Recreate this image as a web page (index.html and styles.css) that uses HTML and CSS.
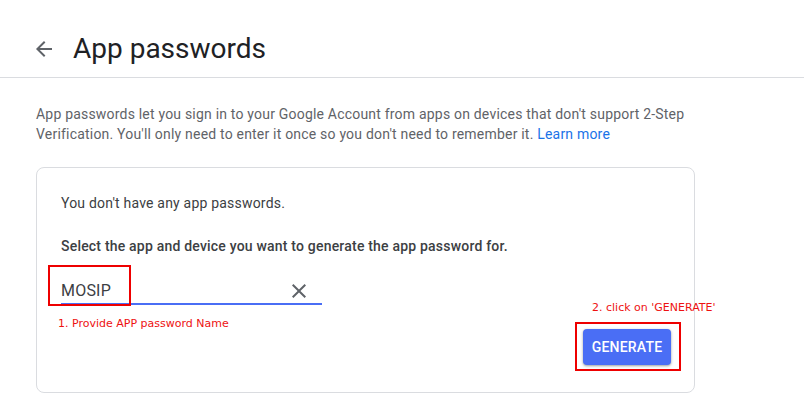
FILE: index.html
```html
<!DOCTYPE html>
<html lang="en">
<head>
<meta charset="utf-8">
<title>App passwords</title>
<link rel="stylesheet" href="styles.css">
</head>
<body>
<header class="topbar">
  <svg class="back" width="24" height="24" viewBox="0 0 24 24"><path d="M20 11H7.83l5.59-5.59L12 4l-8 8 8 8 1.41-1.41L7.83 13H20v-2z" fill="#5f6368"/></svg>
  <h1 class="title">App passwords</h1>
</header>
<main class="content">
  <p class="intro">App passwords let you sign in to your Google Account from apps on devices that don't support 2-Step Verification. You'll only need to enter it once so you don't need to remember it. <a class="link" href="#">Learn more</a></p>
  <section class="card">
    <p class="empty">You don't have any app passwords.</p>
    <p class="prompt">Select the app and device you want to generate the app password for.</p>
    <div class="field">
      <span class="value">MOSIP</span>
      <svg class="clear" width="24" height="24" viewBox="0 0 24 24"><path d="M19 6.41L17.59 5 12 10.59 6.41 5 5 6.41 10.59 12 5 17.59 6.41 19 12 13.41 17.59 19 19 17.59 13.41 12z" fill="#5f6368"/></svg>
    </div>
    <div class="actions">
      <button class="generate">GENERATE</button>
    </div>
    <span class="mark mark-field"></span>
    <span class="note note-field">1. Provide APP password Name</span>
    <span class="note note-button">2. click on 'GENERATE'</span>
    <span class="mark mark-button"></span>
  </section>
</main>
</body>
</html>
```
FILE: styles.css
```css
* { box-sizing: border-box; }
html, body { margin: 0; padding: 0; background: #fff; }
body { font-family: Roboto, "Noto Sans", Arial, sans-serif; color: #3c4043; }

.topbar {
  height: 78px;
  border-bottom: 1px solid #dadce0;
  display: flex;
  align-items: center;
  padding: 20px 0 0 32px;
}
.back { flex: none; margin-right: 17px; }
.title {
  margin: 0;
  font-weight: 400;
  font-size: 28px;
  color: #202124;
}

.content { padding: 26px 0 0 36px; }
.intro {
  margin: 0;
  width: 700px;
  font-size: 14px;
  line-height: 20px;
  letter-spacing: 0.2px;
  color: #5f6368;
}
.link { color: #1a73e8; text-decoration: none; }

.card {
  position: relative;
  margin-top: 23px;
  width: 659px;
  height: 226px;
  border: 1px solid #dadce0;
  border-radius: 8px;
  padding: 25px 23px 0 24px;
}
.empty {
  margin: 0;
  font-size: 14px;
  line-height: 20px;
  letter-spacing: 0.2px;
  color: #3c4043;
}
.prompt {
  margin: 23px 0 0;
  font-size: 14px;
  line-height: 20px;
  letter-spacing: 0.2px;
  font-weight: 500;
  color: #3c4043;
}
.field {
  margin-top: 23px;
  width: 261px;
  height: 26px;
  border-bottom: 2px solid #4a6ef5;
  display: flex;
  align-items: center;
  justify-content: space-between;
  padding: 0 11px 0 0;
}
.value { font-size: 16px; line-height: 24px; letter-spacing: 0.2px; color: #3c4043; }
.clear { flex: none; }

.actions {
  display: flex;
  justify-content: flex-end;
  margin-top: 24px;
}
.generate {
  width: 88px;
  height: 36px;
  border: 0;
  border-radius: 4px;
  background: #4a6ef5;
  color: #fff;
  font-family: Roboto, sans-serif;
  font-weight: 500;
  font-size: 14px;
  letter-spacing: 0.2px;
  box-shadow: 0 1px 3px rgba(60, 64, 67, 0.35), 0 1px 2px rgba(60, 64, 67, 0.2);
}

.mark {
  position: absolute;
  border: 2px solid #ee0000;
}
.mark-field { left: 11px; top: 97px; width: 83px; height: 41px; }
.mark-button { left: 538px; top: 154px; width: 106px; height: 49px; }
.note {
  position: absolute;
  font-family: "DejaVu Sans", sans-serif;
  font-size: 11px;
  line-height: 13px;
  color: #ee1111;
  white-space: nowrap;
}
.note-field { left: 21px; top: 149px; }
.note-button { left: 555px; top: 133px; }
```
